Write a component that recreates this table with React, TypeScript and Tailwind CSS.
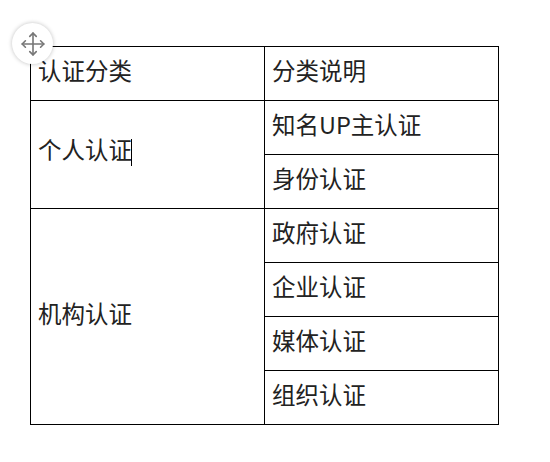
import { Move } from "lucide-react";

const rows = [
  { label: "个人认证", caret: true, items: ["知名UP主认证", "身份认证"] },
  { label: "机构认证", caret: false, items: ["政府认证", "企业认证", "媒体认证", "组织认证"] },
];

const cell = "border border-black h-[54px] pl-[7px] pr-[7px] pb-[5px] pt-0 align-middle leading-none";

const App = () => {
  return (
    <div className="relative w-[550px] h-[462px] bg-white text-[23.5px] text-[#222] font-['Microsoft_YaHei','Noto_Sans_CJK_SC',sans-serif]">
      <div className="pt-[46px] pl-[30px]">
        <table className="border-collapse w-[469px] table-fixed">
          <tbody>
            <tr>
              <td className={cell}>认证分类</td>
              <td className={cell}>分类说明</td>
            </tr>
            {rows.map((row) =>
              row.items.map((item, i) => (
                <tr key={item}>
                  {i === 0 && (
                    <td className={cell} rowSpan={row.items.length}>
                      {row.label}
                      {row.caret && (
                        <span className="inline-block w-px h-[27px] bg-black align-middle -ml-px" />
                      )}
                    </td>
                  )}
                  <td className={cell}>{item}</td>
                </tr>
              )),
            )}
          </tbody>
        </table>
      </div>
      <div className="absolute left-[12px] top-[23px] w-[41px] h-[41px] rounded-full bg-white shadow-[0_0_4px_rgba(0,0,0,0.25)] flex items-center justify-center">
        <Move size={26} strokeWidth={1.5} className="text-[#777]" />
      </div>
    </div>
  );
};

export default App;
